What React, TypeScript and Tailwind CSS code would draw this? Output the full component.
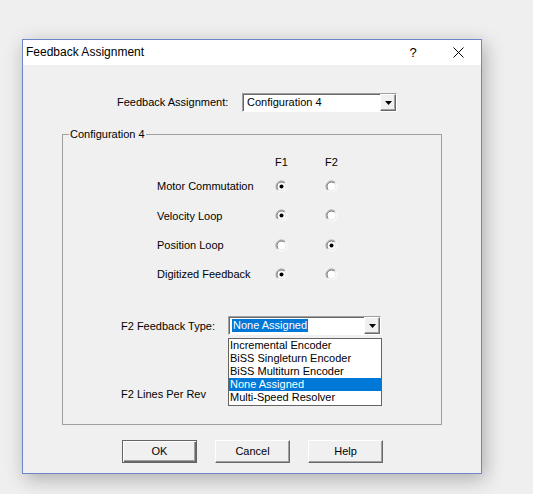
import React from 'react';

const rows = [
  { label: 'Motor Commutation', f1: true },
  { label: 'Velocity Loop', f1: true },
  { label: 'Position Loop', f1: false },
  { label: 'Digitized Feedback', f1: true },
];

const options = [
  'Incremental Encoder',
  'BiSS Singleturn Encoder',
  'BiSS Multiturn Encoder',
  'None Assigned',
  'Multi-Speed Resolver',
];

function Radio({ checked }: { checked: boolean }) {
  return (
    <svg width="13" height="13" viewBox="0 0 13 13" className="block">
      <circle cx="6.5" cy="6.5" r="5.5" fill="#fff" />
      <path d="M2.6 10.4 A5.5 5.5 0 0 1 10.4 2.6" fill="none" stroke="#a0a0a0" strokeWidth="1" />
      <path d="M10.4 2.6 A5.5 5.5 0 0 1 2.6 10.4" fill="none" stroke="#fff" strokeWidth="1" />
      <path d="M3.3 9.7 A4.5 4.5 0 0 1 9.7 3.3" fill="none" stroke="#696969" strokeWidth="1" />
      <path d="M9.7 3.3 A4.5 4.5 0 0 1 3.3 9.7" fill="none" stroke="#e3e3e3" strokeWidth="1" />
      {checked && <circle cx="6.5" cy="6.5" r="2" fill="#000" />}
    </svg>
  );
}

function ComboArrow() {
  return (
    <div className="w-[16px] h-full bg-[#f0f0f0] border border-t-white border-l-white border-r-[#696969] border-b-[#696969] shadow-[inset_-1px_-1px_0_#a0a0a0] flex items-center justify-center">
      <svg width="7" height="4" viewBox="0 0 7 4">
        <path d="M0 0 H7 L3.5 4 Z" fill="#000" />
      </svg>
    </div>
  );
}

function Button({ label, primary }: { label: string; primary?: boolean }) {
  return (
    <button
      className={`w-[75px] h-[23px] bg-[#f0f0f0] ${
        primary
          ? 'border border-[#646464] shadow-[inset_1px_1px_0_#fff,inset_-1px_-1px_0_#696969,inset_-2px_-2px_0_#a0a0a0]'
          : 'border border-t-white border-l-white border-r-[#696969] border-b-[#696969] shadow-[inset_-1px_-1px_0_#a0a0a0]'
      }`}
    >
      {label}
    </button>
  );
}

export default function App() {
  return (
    <div className="w-[533px] h-[494px] overflow-hidden bg-[#efefef] pt-[39px] pl-[22px] font-['Liberation_Sans',Arial,sans-serif] text-[11px] text-black">
      <div className="w-[460px] h-[435px] flex flex-col border border-[#6f86c6] bg-[#f0f0f0] shadow-[3px_5px_18px_rgba(0,0,0,0.28)]">
        <div className="h-[25px] shrink-0 bg-white flex items-center pl-[3px] text-[12px]">
          <span className="-mt-[1px]">Feedback Assignment</span>
          <span className="ml-auto w-[10px] text-center text-[13px] mr-[35px]">?</span>
          <svg width="11" height="11" viewBox="0 0 11 11" className="mr-[17px]">
            <path d="M0.5 0.5 L10.5 10.5 M10.5 0.5 L0.5 10.5" stroke="#000" strokeWidth="1" />
          </svg>
        </div>

        <div className="flex-1">
          <div className="flex items-center pl-[94px] mt-[28px]">
            <span className="w-[125px]">Feedback Assignment:</span>
            <div className="w-[155px] h-[19px] flex bg-white border border-t-[#a0a0a0] border-l-[#a0a0a0] border-r-white border-b-white shadow-[inset_1px_1px_0_#696969]">
              <span className="flex-1 pl-[4px] leading-[17px]">Configuration 4</span>
              <ComboArrow />
            </div>
          </div>

          <fieldset className="ml-[39px] mt-[15px] w-[380px] h-[298px] border border-[#a0a0a0]">
            <legend className="ml-[6px] px-[1px] leading-[14px]">Configuration 4</legend>

            <div className="pl-[94px] mt-[14px]">
              <div className="flex h-[14px] items-center">
                <span className="w-[118px]" />
                <span className="w-[13px] text-center">F1</span>
                <span className="w-[37px]" />
                <span className="w-[13px] text-center">F2</span>
              </div>
              <div className="mt-[3px]">
                {rows.map((r) => (
                  <div key={r.label} className="flex h-[29.33px] items-center">
                    <span className="w-[118px]">{r.label}</span>
                    <Radio checked={r.f1} />
                    <span className="w-[37px]" />
                    <Radio checked={!r.f1} />
                  </div>
                ))}
              </div>
            </div>

            <div className="pl-[58px] mt-[27px]">
              <div className="flex items-center">
                <span className="w-[107px]">F2 Feedback Type:</span>
                <div className="relative w-[153px] h-[19px] flex bg-white border border-t-[#a0a0a0] border-l-[#a0a0a0] border-r-white border-b-white shadow-[inset_1px_1px_0_#696969]">
                  <div className="flex-1 pl-[3px] flex items-center">
                    <span className="bg-[#0078d7] text-white leading-[13px] px-[1px]">None Assigned</span>
                  </div>
                  <ComboArrow />
                  <div className="absolute left-[-1px] top-[21px] w-[154px] z-10 bg-white border border-[#646464] pb-[1px]">
                    {options.map((o) => (
                      <div
                        key={o}
                        className={`h-[13px] leading-[13px] pl-[1px] ${
                          o === 'None Assigned' ? 'bg-[#0078d7] text-white' : ''
                        }`}
                      >
                        {o}
                      </div>
                    ))}
                  </div>
                </div>
              </div>

              <div className="flex items-center mt-[49px]">
                <span className="w-[107px]">F2 Lines Per Rev</span>
                <div className="w-[153px] h-[19px] bg-white border border-t-[#a0a0a0] border-l-[#a0a0a0] border-r-white border-b-white shadow-[inset_1px_1px_0_#696969]" />
              </div>
            </div>
          </fieldset>

          <div className="flex gap-[18px] pl-[99px] mt-[15px]">
            <Button label="OK" primary />
            <Button label="Cancel" />
            <Button label="Help" />
          </div>
        </div>
      </div>
    </div>
  );
}
